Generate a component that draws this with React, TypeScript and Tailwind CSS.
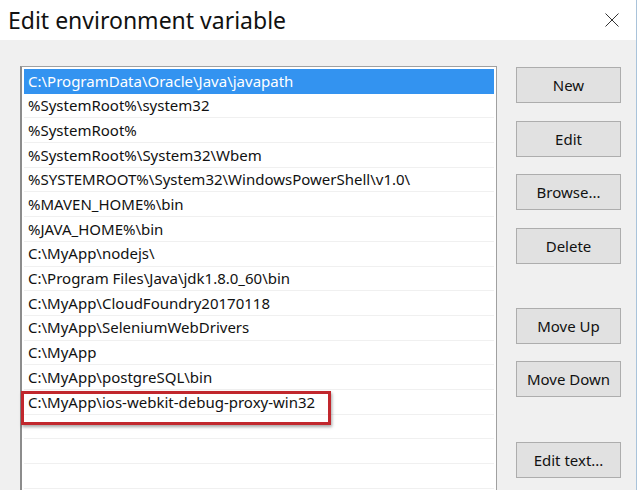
import React from 'react';

const PATHS = [
  'C:\\ProgramData\\Oracle\\Java\\javapath',
  '%SystemRoot%\\system32',
  '%SystemRoot%',
  '%SystemRoot%\\System32\\Wbem',
  '%SYSTEMROOT%\\System32\\WindowsPowerShell\\v1.0\\',
  '%MAVEN_HOME%\\bin',
  '%JAVA_HOME%\\bin',
  'C:\\MyApp\\nodejs\\',
  'C:\\Program Files\\Java\\jdk1.8.0_60\\bin',
  'C:\\MyApp\\CloudFoundry20170118',
  'C:\\MyApp\\SeleniumWebDrivers',
  'C:\\MyApp',
  'C:\\MyApp\\postgreSQL\\bin',
  'C:\\MyApp\\ios-webkit-debug-proxy-win32',
  '',
  '',
  '',
];

const WinButton: React.FC<{ label: string; className?: string }> = ({ label, className = '' }) => (
  <button
    className={`w-[105px] h-[36px] bg-[#e1e1e1] border border-[#adadad] text-[15px] text-[#111] ${className}`}
  >
    {label}
  </button>
);

const App: React.FC = () => {
  return (
    <div
      className="w-[640px] h-[490px] overflow-hidden bg-white"
      style={{ fontFamily: '"Noto Sans", "Open Sans", sans-serif' }}
    >
      <div className="w-[637px] h-full border-r border-[#a9c3da] flex flex-col">
        {/* Title bar */}
        <header className="h-[40px] flex-none flex items-center justify-between pl-[8px] pr-[17px] bg-white">
          <h1 className="text-[23px] text-[#111] leading-none">Edit environment variable</h1>
          <svg width="14" height="14" viewBox="0 0 14 14" className="text-[#333]">
            <path d="M0.5 0.5 L13.5 13.5 M13.5 0.5 L0.5 13.5" stroke="currentColor" strokeWidth="1" fill="none" />
          </svg>
        </header>

        {/* Body */}
        <main className="flex-1 bg-[#f0f0f0] flex pl-[20px] pt-[26px]">
          <div className="relative w-[477px] h-[440px] bg-white border border-[#a0a0a0] border-l-2 border-l-[#8c8c8c] pt-[2px] px-[2px]">
            {PATHS.map((p, i) => (
              <div
                key={i}
                className={`h-[24.7px] flex items-center pl-[4px] text-[15px] whitespace-nowrap border-b ${
                  i === 0
                    ? 'bg-[#3393f0] text-white border-[#3393f0]'
                    : 'text-[#111] border-[#f0f0f0]'
                }`}
              >
                {p}
              </div>
            ))}
            {/* annotation highlight */}
            <div className="absolute left-[-1px] top-[324px] w-[310px] h-[34px] border-[3px] border-[#c1272d] shadow-[1px_2px_3px_rgba(0,0,0,0.35)]" />
          </div>

          <aside className="ml-[19px] pt-[1px] flex flex-col">
            <WinButton label="New" />
            <WinButton label="Edit" className="mt-[18px]" />
            <WinButton label="Browse..." className="mt-[17px]" />
            <WinButton label="Delete" className="mt-[18px]" />
            <WinButton label="Move Up" className="mt-[44px]" />
            <WinButton label="Move Down" className="mt-[17px]" />
            <WinButton label="Edit text..." className="mt-[45px]" />
          </aside>
        </main>
      </div>
    </div>
  );
};

export default App;
